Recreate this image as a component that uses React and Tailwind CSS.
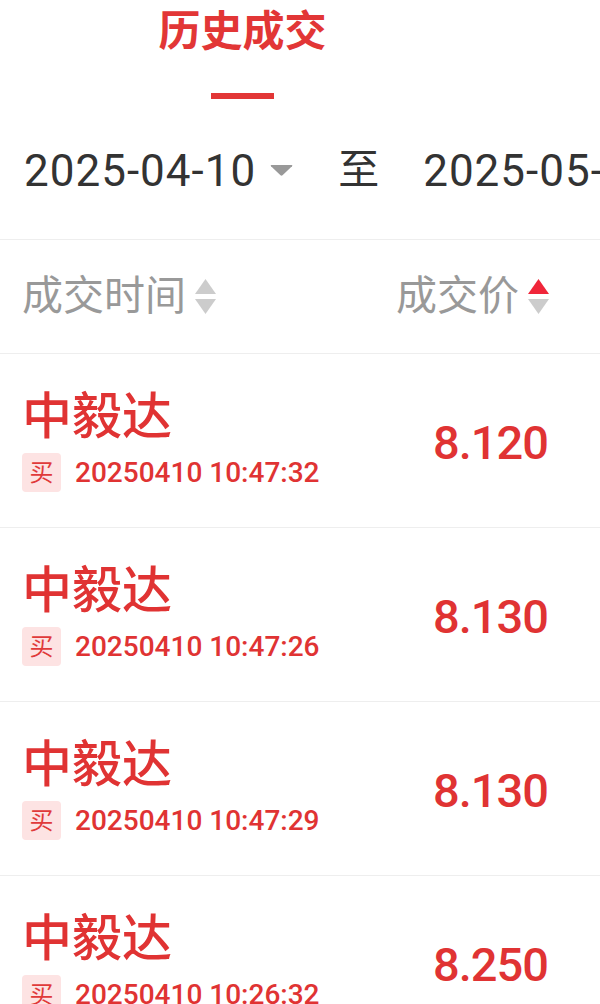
import React from "react";

const trades = [
  { name: "中毅达", side: "买", time: "20250410 10:47:32", price: "8.120" },
  { name: "中毅达", side: "买", time: "20250410 10:47:26", price: "8.130" },
  { name: "中毅达", side: "买", time: "20250410 10:47:29", price: "8.130" },
  { name: "中毅达", side: "买", time: "20250410 10:26:32", price: "8.250" },
];

const cjk = { fontFamily: 'Roboto, "Noto Sans CJK SC", sans-serif' };

const SortIcon = ({ active }) => (
  <div className="flex flex-col gap-[5px] ml-[9px] shrink-0">
    <svg width="21" height="15" viewBox="0 0 21 15">
      <path d="M10.5 0 L21 15 L0 15 Z" fill={active === "up" ? "#f0263a" : "#cccccc"} />
    </svg>
    <svg width="21" height="15" viewBox="0 0 21 15">
      <path d="M0 0 L21 0 L10.5 15 Z" fill={active === "down" ? "#f0263a" : "#cccccc"} />
    </svg>
  </div>
);

const TradeRow = ({ trade }) => (
  <div className="h-[174px] flex items-center justify-between pl-[22px] pr-[52px] border-b border-[#eeeeee]">
    <div className="flex flex-col">
      <div className="text-[50px] leading-[58px] font-medium text-[#e03333]">{trade.name}</div>
      <div className="flex items-center mt-[6px]">
        <span className="w-[39px] h-[39px] rounded-[4px] bg-[#fde3e3] text-[#e03a3a] text-[24px] flex items-center justify-center">
          {trade.side}
        </span>
        <span className="ml-[14px] text-[28px] font-medium text-[#e03333]">{trade.time}</span>
      </div>
    </div>
    <div className="text-[47px] font-medium tracking-[-1px] text-[#e03333] mt-[6px]">{trade.price}</div>
  </div>
);

export default function App() {
  return (
    <div className="w-[600px] h-[1004px] overflow-hidden bg-white" style={cjk}>
      {/* Tabs */}
      <div className="flex">
        <div className="w-[485px] flex flex-col items-center">
          <div className="text-[42px] leading-[64px] font-bold text-[#e23636]">历史成交</div>
          <div className="w-[63px] h-[6px] mt-[29px] bg-[#e23636]" />
        </div>
      </div>

      {/* Date range */}
      <div className="h-[141px] flex items-center whitespace-nowrap pl-[24px] pt-[3px] border-b border-[#eeeeee] text-[#333333]">
        <span className="shrink-0 text-[44px] tracking-[1px]">2025-04-10</span>
        <svg className="shrink-0 ml-[14px]" width="23" height="11" viewBox="0 0 23 11">
          <path d="M1.5 0 L21.5 0 Q23 0 22 1.2 L12.5 10.3 Q11.5 11 10.5 10.3 L1 1.2 Q0 0 1.5 0 Z" fill="#999999" />
        </svg>
        <span className="shrink-0 ml-[45px] text-[41px]">至</span>
        <span className="shrink-0 ml-[44px] text-[44px] tracking-[1px]">2025-05-10</span>
      </div>

      {/* Header */}
      <div className="h-[114px] flex items-center justify-between pl-[22px] pr-[51px] border-b border-[#eeeeee] text-[#999999]">
        <div className="flex items-center">
          <span className="text-[41px]">成交时间</span>
          <SortIcon />
        </div>
        <div className="flex items-center">
          <span className="text-[41px]">成交价</span>
          <SortIcon active="up" />
        </div>
      </div>

      {trades.map((t, i) => (
        <TradeRow key={i} trade={t} />
      ))}
    </div>
  );
}
